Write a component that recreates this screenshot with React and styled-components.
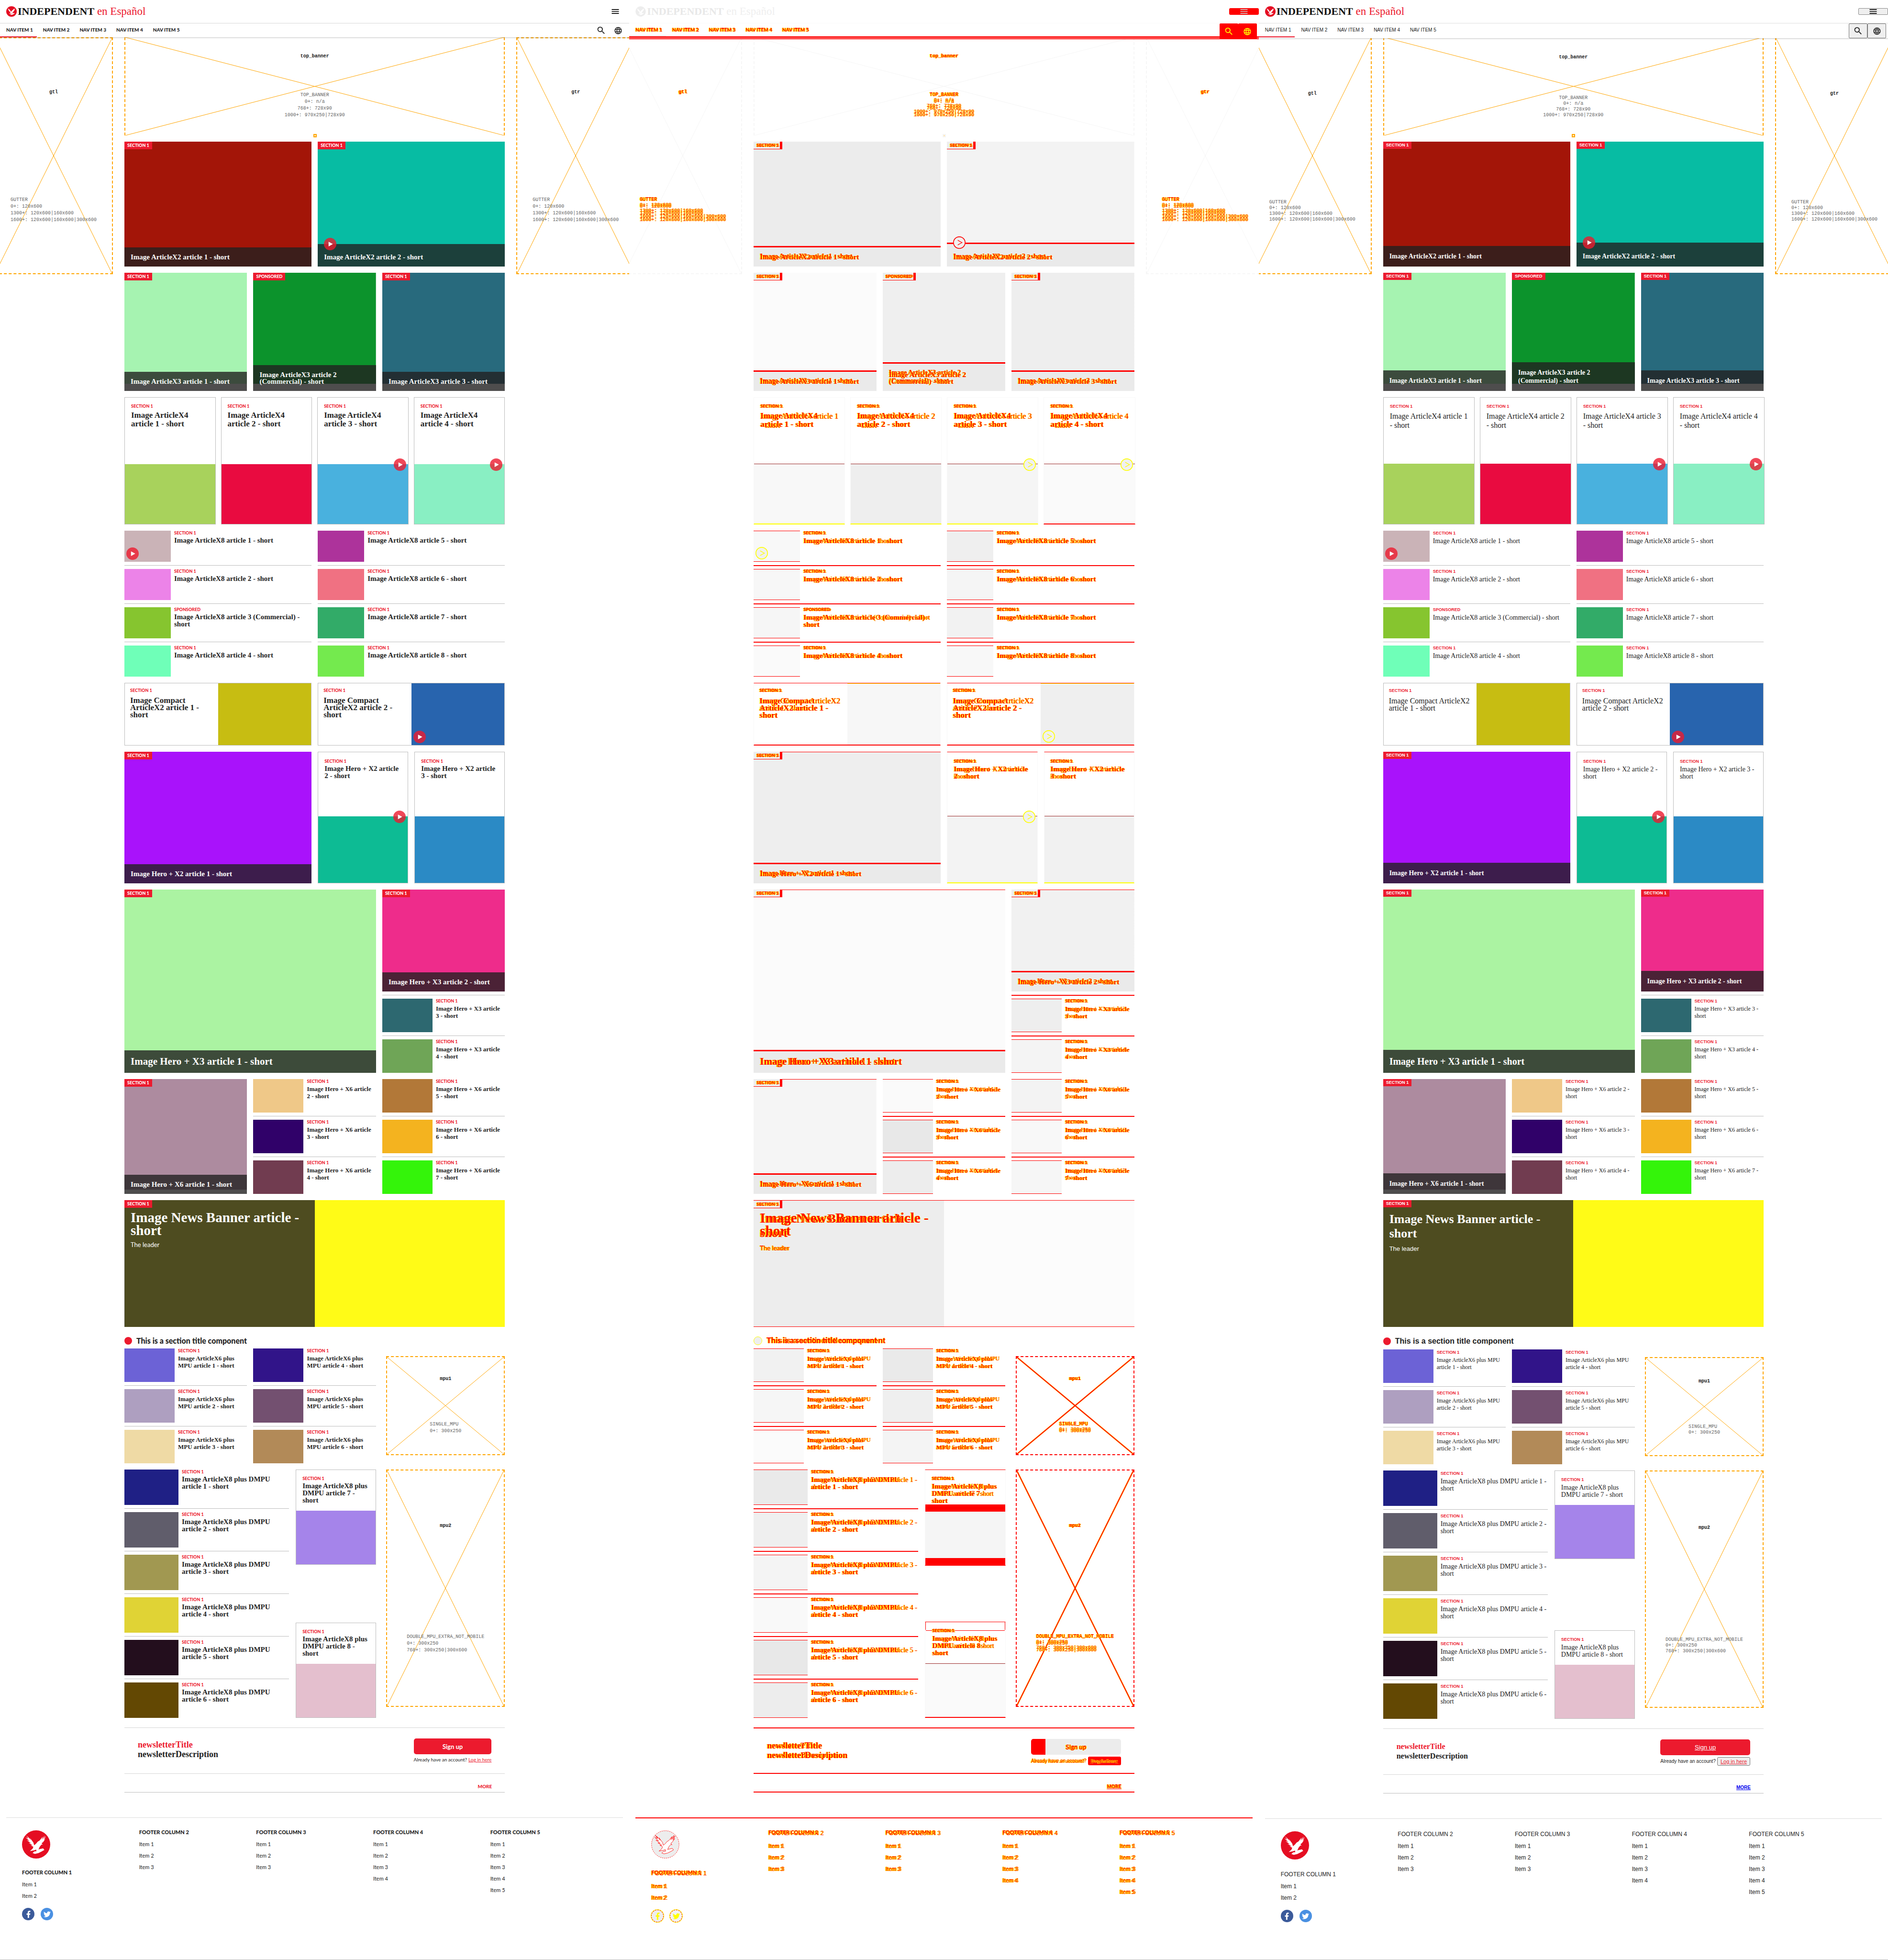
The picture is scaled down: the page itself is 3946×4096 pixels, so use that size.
import React from "react";
import styled, { createGlobalStyle, css, ThemeProvider, useTheme } from "styled-components";
import { MdMenu, MdSearch, MdLanguage } from "react-icons/md";
import { FaFacebookF, FaTwitter } from "react-icons/fa";

const RED = "#ec1a2e";
const INK = "#222222";
const LINE = "#bdbdbd";
const DIFF = "#ff0000";
const EDGE = "#ffff00";
const SERIF = '"Liberation Serif", "Times New Roman", serif';
const SANS = '"Liberation Sans", Arial, sans-serif';
const BRAND = 'Lato, "Open Sans", sans-serif';
const MONO = '"Liberation Mono", "Courier New", monospace';

/* Unchanged pixels of a comparison are faded to a tenth of their grey value. */
const fade = (hex) => {
  const n = parseInt(hex.slice(1), 16);
  const y = 0.3 * (n >> 16) + 0.59 * ((n >> 8) & 255) + 0.11 * (n & 255);
  const v = Math.round(255 - (255 - y) * 0.1);
  return `rgb(${v}, ${v}, ${v})`;
};
const paint = (theme, hex) => (theme.mode === "diff" ? fade(hex) : hex);
const pick = (theme, before, diff, after) => ({ before, diff, after })[theme.mode];

/* [family, size, line height, weight] of each text role, before and after. */
const TYPE = {
  kicker: { before: [BRAND, 9, 9, 900], after: [SANS, 9, 10, 700] },
  badge: { before: [BRAND, 9, 16, 900], after: [SANS, 9, 15, 700] },
  caption: { before: [SERIF, 15, 14, 700], after: [SERIF, 14, 17, 700] },
  captionLarge: { before: [SERIF, 21, 21, 700], after: [SERIF, 20, 22, 700] },
  large: { before: [SERIF, 17, 18, 700], after: [SERIF, 16, 19, 400] },
  compact: { before: [SERIF, 17, 15, 700], after: [SERIF, 16, 15, 400] },
  medium: { before: [SERIF, 15, 15, 700], after: [SERIF, 14, 15, 400] },
  small: { before: [SERIF, 13, 15, 700], after: [SERIF, 12, 15, 400] },
  banner: { before: [SERIF, 29, 27, 700], after: [SERIF, 26, 30, 700] },
  leader: { before: [BRAND, 13, 16, 400], after: [SANS, 13, 18, 400] },
  section: { before: [BRAND, 16, 16, 900], after: [SANS, 16, 18, 700] },
  news: { before: [SERIF, 18, 20, 700], after: [SERIF, 16, 20, 700] },
  button: { before: [BRAND, 13, 16, 700], after: [SANS, 13, 16, 400] },
  note: { before: [BRAND, 10, 14, 400], after: [SANS, 10, 14, 400] },
  link: { before: [BRAND, 10, 14, 400], after: [SANS, 11, 14, 400] },
  more: { before: [BRAND, 10, 12, 900], after: [SANS, 10, 14, 700] },
  nav: { before: [BRAND, 10, 14, 900], after: [SANS, 10, 16, 400] },
  footHead: { before: [BRAND, 11, 14, 900], after: [SANS, 12, 18, 400] },
  footItem: { before: [BRAND, 11, 24, 400], after: [SANS, 12, 24, 400] },
  adName: { before: [MONO, 10, 14, 700], after: [MONO, 10, 14, 700] },
  adSize: { before: [MONO, 10, 14, 400], after: [MONO, 10, 12, 400] },
};

const Global = createGlobalStyle`
  * { box-sizing: border-box; }
  body { margin: 0; background: #ffffff; }
  h2, h3, p, ul { margin: 0; padding: 0; font-weight: inherit; font-size: inherit; }
  ul { list-style: none; }
  a { color: inherit; text-decoration: none; }
  button { font: inherit; color: inherit; cursor: pointer; }
`;

const Board = styled.div`
  display: grid;
  grid-template-columns: repeat(3, minmax(0, 1fr));
  min-height: 100vh;
  border-bottom: 1px solid ${LINE};
`;

const Panel = styled.div`
  overflow: hidden;
  color: ${INK};
  background: #ffffff;
`;

const Copy = styled.span`
  display: block;
  grid-area: 1 / 1;
  white-space: pre;
  ${({ $role, $when }) => {
    const [family, size, line, weight] = TYPE[$role][$when];
    return css`
      font: ${weight} ${size}px / ${line}px ${family};
    `;
  }}
  ${({ theme }) =>
    theme.mode === "diff" &&
    css`
      color: ${DIFF};
      text-shadow: 1px 0 0 ${EDGE}, -1px 0 0 ${EDGE};
    `}
`;

const Stack = styled.span`
  display: grid;
  align-items: ${({ $end }) => ($end ? "end" : "start")};
`;

function Text({ role, end, children, after }) {
  const { mode } = useTheme();
  const next = after ?? children;
  if (mode === "before") return <Copy $role={role} $when="before">{children}</Copy>;
  if (mode === "after") return <Copy $role={role} $when="after">{next}</Copy>;
  return (
    <Stack $end={end}>
      <Copy $role={role} $when="after">{next}</Copy>
      <Copy $role={role} $when="before">{children}</Copy>
    </Stack>
  );
}

/* ---------- header ---------- */

const Header = styled.header`
  position: relative;
  z-index: 2;
  height: 78px;
`;

const TopBar = styled.div`
  display: flex;
  align-items: center;
  justify-content: space-between;
  height: 49px;
  padding-left: 13px;
  border-bottom: 1px solid ${({ theme }) => pick(theme, "#dddddd", "#fafafa", "#e2e2e2")};
`;

const Brand = styled.a`
  display: flex;
  align-items: center;
  gap: 2px;
  font: 700 22px / 30px ${SERIF};
  color: ${({ theme }) => pick(theme, "#111111", "#e8e8e8", "#111111")};
`;

const Edition = styled.span`
  font-size: 23px;
  font-weight: 400;
  color: ${({ theme }) => pick(theme, RED, "#efefef", RED)};
`;

const MenuButton = styled.button`
  display: flex;
  align-items: center;
  justify-content: center;
  height: 14px;
  width: 62px;
  padding: 0;
  color: #000000;
  border: 0;
  background: none;
  ${({ theme }) =>
    theme.mode === "before" &&
    css`
      width: 59px;
    `}
  ${({ theme }) =>
    theme.mode === "after" &&
    css`
      border: 1px solid #8a8a8a;
      border-radius: 2px;
      background: #efefef;
    `}
  ${({ theme }) =>
    theme.mode === "diff" &&
    css`
      color: #c9c9c9;
      border-radius: 3px;
      background: ${DIFF};
    `}
  svg { flex: none; }
`;

const NavBar = styled.nav`
  display: flex;
  justify-content: space-between;
  height: ${({ theme }) => pick(theme, 29, 33, 31)}px;
  background: #ffffff;
  ${({ theme }) =>
    theme.mode === "diff"
      ? css`
          border-bottom: 2px solid ${DIFF};
          box-shadow: inset 0 -1px 0 #ffffff, inset 0 -4px 0 ${DIFF};
        `
      : css`
          box-shadow: 0 1px 2px rgba(0, 0, 0, 0.25);
        `}
`;

const NavList = styled.ul`
  display: flex;
`;

const NavItem = styled.li`
  height: ${({ theme }) => pick(theme, 29, 27, 29)}px;
  padding: 6px 8px 0 13px;
  border-bottom: 2px solid
    ${({ $current, theme }) => ($current ? pick(theme, RED, "#eeeeee", RED) : "transparent")};
`;

const Tools = styled.div`
  display: flex;
  padding-right: ${({ theme }) => pick(theme, 5, 4, 4)}px;
`;

const ToolButton = styled.button`
  display: flex;
  align-items: center;
  justify-content: center;
  width: ${({ theme }) => pick(theme, 36, 39, 39)}px;
  height: ${({ theme }) => pick(theme, 29, 33, 31)}px;
  padding: 0;
  border: ${({ theme }) => pick(theme, "0", "0", "1px solid #767676")};
  border-radius: 2px;
  color: ${({ theme }) => pick(theme, INK, EDGE, INK)};
  background: ${({ theme }) => pick(theme, "none", DIFF, "#efefef")};
`;

function Eagle({ size, id }) {
  const { mode } = useTheme();
  const diff = mode === "diff";
  return (
    <svg width={size} height={size} viewBox="0 0 72 72" role="img" aria-label="Independent">
      <circle
        cx="36"
        cy="36"
        r={diff ? 35 : 36}
        fill={diff ? "#ededed" : "#e50d22"}
        stroke={diff && id === "foot" ? DIFF : "none"}
        strokeDasharray="3 2"
      />
      <g fill="#ffffff" stroke={diff && id === "foot" ? DIFF : "none"} strokeWidth="1">
        <path d="M10 12 L17 20 L14 15 L23 25 L20 19 L29 31 L31 38 L36 34 L40 29 L45 26 L53 16 L50 24 L58 13 L54 23 L61 14 L56 25 L60 21 L54 30 L50 33 L53 37 L50 36 L45 42 L42 49 L45 48 L54 46 L57 50 L50 54 L42 58 L33 60 L27 58 L31 54 L37 53 L36 49 L31 51 L20 53 L27 47 L29 42 L22 38 L27 38 L17 32 L23 33 L12 25 L19 27 L9 18 L16 21 Z" />
      </g>
    </svg>
  );
}

function SiteHeader() {
  return (
    <Header>
      <TopBar>
        <Brand href="#home">
          <Eagle size={22} id="head" />
          <span>INDEPENDENT<Edition> en Español</Edition></span>
        </Brand>
        <MenuButton aria-label="Menu"><MdMenu size={20} /></MenuButton>
      </TopBar>
      <NavBar>
        <NavList>
          {[1, 2, 3, 4, 5].map((n) => (
            <NavItem key={n} $current={n === 1}>
              <a href={`#nav-${n}`}><Text role="nav">{`NAV ITEM ${n}`}</Text></a>
            </NavItem>
          ))}
        </NavList>
        <Tools>
          <ToolButton aria-label="Search"><MdSearch size={21} /></ToolButton>
          <ToolButton aria-label="Language"><MdLanguage size={18} /></ToolButton>
        </Tools>
      </NavBar>
    </Header>
  );
}

/* ---------- advertising slots ---------- */

const Slot = styled.aside`
  position: relative;
  width: ${({ $w }) => ($w ? `${$w}px` : "auto")};
  height: ${({ $h }) => $h}px;
  border: 2px dashed ${({ $tone }) => $tone};
  ${({ $sides }) =>
    $sides &&
    css`
      border-top: 0;
      border-bottom: 0;
    `}
  svg.cross {
    position: absolute;
    inset: 0;
    width: 100%;
    height: 100%;
  }
`;

const SlotText = styled.div`
  position: relative;
  display: grid;
  grid-template-rows: 1fr 1fr;
  height: 100%;
  > div {
    display: flex;
    align-items: center;
    justify-content: center;
    padding-bottom: ${({ $lift, theme }) => $lift - pick(theme, 0, 0, 5)}px;
  }
  > div:last-child {
    color: #666666;
    text-align: ${({ $center }) => ($center ? "center" : "left")};
  }
`;

const SlotMark = styled.i`
  position: absolute;
  left: 50%;
  bottom: -4px;
  width: 7px;
  height: 7px;
  margin-left: -3px;
  border: 2px solid ${({ $tone }) => $tone};
  background: #ffe9bd;
`;

function Ad({ name, lines, w, h, lift, sides, changed, center }) {
  const { mode } = useTheme();
  const tone = mode !== "diff" ? "#ffa500" : changed ? DIFF : "#f6f6f6";
  const marked = mode === "diff" && changed;
  return (
    <Slot $w={w} $h={h} $tone={tone} $sides={sides}>
      <svg className="cross" viewBox="0 0 100 100" preserveAspectRatio="none" aria-hidden="true">
        {marked && (
          <path d="M0 0 L100 100 M100 0 L0 100" stroke={EDGE} strokeWidth="3" fill="none" vectorEffect="non-scaling-stroke" />
        )}
        <path
          d="M0 0 L100 100 M100 0 L0 100"
          stroke={tone}
          strokeWidth={marked ? 2 : 1}
          fill="none"
          vectorEffect="non-scaling-stroke"
        />
      </svg>
      <SlotText $lift={lift} $center={center}>
        <div><Text role="adName">{name}</Text></div>
        <div><Text role="adSize">{lines.join("\n")}</Text></div>
      </SlotText>
      {sides && <SlotMark $tone={tone} />}
    </Slot>
  );
}

/* ---------- article parts ---------- */

const Kicker = styled.p`
  color: ${RED};
`;

const Badge = styled.p`
  align-self: flex-start;
  height: ${({ theme }) => pick(theme, 16, 16, 15)}px;
  padding: 0 6px;
  color: #ffffff;
  background: ${({ theme }) => pick(theme, RED, "#eeeeee", RED)};
  ${({ theme }) =>
    theme.mode === "diff" &&
    css`
      border-right: 5px solid ${DIFF};
      border-bottom: 1px solid ${DIFF};
      padding-right: 1px;
    `}
`;

const TileBox = styled.article`
  position: relative;
  display: flex;
  flex-direction: column;
  justify-content: space-between;
  height: ${({ $h }) => $h}px;
  background: linear-gradient(${({ $c, theme }) => `${paint(theme, $c)}, ${paint(theme, $c)}`})
    top / 100% ${({ $image, $h }) => $image || $h}px no-repeat;
  ${({ theme, $edge }) =>
    theme.mode === "diff" && $edge &&
    css`
      box-shadow: inset 0 1px 0 ${DIFF}, inset 0 -1px 0 ${DIFF};
    `}
`;

const Caption = styled.div`
  position: relative;
  padding: ${({ $play }) => ($play ? 20 : 13)}px 13px 13px;
  color: #ffffff;
  background: ${({ theme }) => pick(theme, "rgba(34, 32, 32, 0.8)", "#eaeaea", "rgba(34, 32, 32, 0.8)")};
  ${({ theme }) =>
    theme.mode === "diff" &&
    css`
      box-shadow: inset 0 3px 0 ${DIFF};
    `}
`;

const PlayDisc = styled.span`
  position: absolute;
  z-index: 1;
  display: block;
  width: 26px;
  height: 26px;
  ${({ $at }) =>
    ({
      caption: css`top: -13px; left: 13px;`,
      thumb: css`bottom: 4px; left: 4px;`,
      edge: css`top: -12px; right: 4px;`,
    })[$at]}
  svg { display: block; }
`;

function Play({ at }) {
  const { mode } = useTheme();
  const diff = mode === "diff";
  return (
    <PlayDisc $at={at}>
      <svg width="26" height="26" viewBox="0 0 32 32" role="img" aria-label="Video">
        <circle
          cx="16"
          cy="16"
          r={diff ? 15 : 16}
          fill={diff ? "#f0f0f0" : "rgba(236, 26, 46, 0.8)"}
          stroke={diff ? (at === "caption" ? DIFF : EDGE) : "none"}
          strokeWidth="2"
        />
        <path
          d={diff ? "M12 10 L23 16 L12 22" : "M12 10 L23 16 L12 22 Z"}
          fill={diff ? "none" : "#ffffff"}
          stroke={diff ? (at === "caption" ? DIFF : EDGE) : "none"}
          strokeWidth="1.5"
        />
      </svg>
    </PlayDisc>
  );
}

function Tile({ h, image, color, badge = "SECTION 1", title, after, play, role = "caption", edge }) {
  return (
    <TileBox $h={h} $c={color} $image={image} $edge={edge}>
      <Badge><Text role="badge">{badge}</Text></Badge>
      <Caption $play={play}>
        {play && <Play at="caption" />}
        <h3><Text role={role} end after={after}>{title}</Text></h3>
      </Caption>
    </TileBox>
  );
}

const CardBox = styled.article`
  display: flex;
  flex-direction: ${({ $row }) => ($row ? "row" : "column")};
  height: ${({ $h }) => ($h ? `${$h}px` : "auto")};
  border: 1px solid ${({ theme }) => pick(theme, LINE, "#f8f8f8", LINE)};
  ${({ theme, $top, $bottom }) =>
    theme.mode === "diff" &&
    css`
      border-top-color: ${$top || "#f8f8f8"};
      border-bottom-color: ${$bottom || "#f8f8f8"};
      border-bottom-width: 2px;
    `}
`;

const CardText = styled.div`
  flex: ${({ $row }) => ($row ? "0 0 50%" : "1 1 0")};
  min-width: 0;
  padding: ${({ $pad }) => $pad};
  h3 { margin-top: ${({ $gap }) => $gap}px; }
  ${({ theme, $moved }) =>
    theme.mode === "diff" && $moved === "box" &&
    css`
      border: solid ${DIFF};
      border-width: 0 1px;
      border-image: linear-gradient(${DIFF} 17px, transparent 17px) 1;
      background: linear-gradient(${DIFF}, ${DIFF}) 0 17px / 100% 1px no-repeat;
    `}
`;

const Picture = styled.div`
  position: relative;
  flex: ${({ $h }) => ($h ? `0 0 ${$h}px` : "1 1 0")};
  background: ${({ $c, theme }) => paint(theme, $c)};
  ${({ theme, $row }) =>
    theme.mode === "diff" &&
    css`
      border-top: 1px solid ${$row ? EDGE : "#9a2a2a"};
    `}
  ${({ theme, $moved }) =>
    theme.mode === "diff" && $moved === "bars" &&
    css`
      border-top-color: ${DIFF};
      box-shadow: 0 -14px 0 ${DIFF}, inset 0 -14px 0 ${DIFF};
    `}
`;

function Card({ h, image, color, title, after, role, pad, gap, play, row, top, bottom, moved }) {
  return (
    <CardBox $h={h} $row={row} $top={top} $bottom={bottom}>
      <CardText $pad={pad} $gap={gap} $row={row} $moved={moved}>
        <Kicker><Text role="kicker">SECTION 1</Text></Kicker>
        <h3><Text role={role} after={after}>{title}</Text></h3>
      </CardText>
      <Picture $h={image} $c={color} $row={row} $moved={moved}>
        {play && <Play at={row ? "thumb" : "edge"} />}
      </Picture>
    </CardBox>
  );
}

const List = styled.div`
  display: flex;
  flex-direction: column;
  > * + * {
    margin-top: 7px;
    padding-top: ${({ theme }) => pick(theme, 7, 6, 7)}px;
    border-top: ${({ theme }) => pick(theme, `1px solid ${LINE}`, `2px solid ${DIFF}`, `1px solid ${LINE}`)};
  }
`;

const RowBox = styled.article`
  display: flex;
  gap: 7px;
`;

const Thumb = styled.div`
  position: relative;
  flex: 0 0 ${({ $w }) => $w}px;
  height: ${({ $h }) => $h}px;
  background: ${({ $c, theme }) => paint(theme, $c)};
  ${({ theme }) =>
    theme.mode === "diff" &&
    css`
      border: solid ${DIFF};
      border-width: 1px 0;
    `}
`;

const RowText = styled.div`
  padding-top: ${({ theme, $drop }) => pick(theme, 0, 0, $drop ? 1 : 0)}px;
  h3 { margin-top: 4px; }
`;

function Row({ w, h, color, kicker = "SECTION 1", title, after, role, play, drop }) {
  return (
    <RowBox>
      <Thumb $w={w} $h={h} $c={color}>{play && <Play at="thumb" />}</Thumb>
      <RowText $drop={drop}>
        <Kicker><Text role="kicker">{kicker}</Text></Kicker>
        <h3><Text role={role} after={after}>{title}</Text></h3>
      </RowText>
    </RowBox>
  );
}

/* ---------- page body ---------- */

const Main = styled.main`
  display: grid;
  grid-template-columns: 248px minmax(0, 1fr) 248px;
  align-items: start;
  column-gap: 24px;
  margin: 0 -12px;
`;

const Center = styled.div`
  display: flex;
  flex-direction: column;
  gap: 13px;
`;

const Columns = styled.section`
  display: grid;
  grid-template-columns: ${({ $cols }) => $cols};
  column-gap: ${({ $gap }) => $gap || 13}px;
  align-items: start;
`;

const Wide = styled.div`
  grid-column: span 2;
`;

const NewsBanner = styled.article`
  display: grid;
  grid-template-columns: 1fr 1fr;
  height: 265px;
  background: ${({ theme }) => paint(theme, "#fffb17")};
  ${({ theme }) =>
    theme.mode === "diff" &&
    css`
      border: solid ${DIFF};
      border-width: 1px 0;
    `}
`;

const NewsText = styled.div`
  display: flex;
  flex-direction: column;
  color: #ffffff;
  background: ${({ theme }) => paint(theme, "#4e4c20")};
  box-shadow: inset 1px 0 0 ${({ theme }) => pick(theme, "#4d4d3a", "#ebebeb", "#4d4d3a")};
  h2 { margin: ${({ theme }) => pick(theme, 7, 7, 10)}px 13px 0; }
  p + h2 + p { margin: 8px 13px 0; }
`;

const SectionTitle = styled.h2`
  display: flex;
  align-items: center;
  gap: 9px;
  height: ${({ theme }) => pick(theme, 16, 16, 18)}px;
  margin: 8px 0 8px;
  &::before {
    content: "";
    width: 16px;
    height: 16px;
    border-radius: 50%;
    background: ${({ theme }) => pick(theme, RED, "#eeeeee", RED)};
    border: ${({ theme }) => pick(theme, "0", `1px solid ${EDGE}`, "0")};
  }
`;

const AdCell = styled.div`
  display: flex;
  justify-content: flex-end;
  padding-top: ${({ $top }) => $top || 0}px;
`;

const Spread = styled.div`
  display: flex;
  flex-direction: column;
  justify-content: space-between;
  align-self: stretch;
`;

const Newsletter = styled.section`
  display: flex;
  justify-content: space-between;
  height: 97px;
  margin-top: 7px;
  padding: 22px 28px 0;
  border: solid ${({ theme }) => pick(theme, "#d6d6d6", DIFF, "#d6d6d6")};
  border-width: ${({ theme }) => pick(theme, 1, 2, 1)}px 0;
`;

const NewsletterText = styled.div`
  padding-top: ${({ theme }) => pick(theme, 3, 4, 5)}px;
  h2 { color: ${RED}; }
`;

const SignUp = styled.div`
  display: flex;
  flex-direction: column;
`;

const SignUpButton = styled.button`
  display: flex;
  align-items: center;
  justify-content: center;
  height: 33px;
  border: 0;
  border-radius: 5px;
  color: #ffffff;
  text-decoration: ${({ theme }) => pick(theme, "none", "none", "underline")};
  background: ${({ theme }) =>
    pick(theme, RED, `linear-gradient(90deg, ${DIFF} 30px, #ececec 30px)`, RED)};
`;

const LoginLine = styled.div`
  display: flex;
  align-items: center;
  gap: 3px;
  height: ${({ theme }) => pick(theme, 22, 26, 26)}px;
`;

const LoginButton = styled.button`
  padding: ${({ theme }) => pick(theme, "0", "2px 7px", "1px 6px")};
  border: ${({ theme }) => pick(theme, "0", "0", "1px solid #767676")};
  border-radius: 3px;
  color: ${RED};
  text-decoration: underline;
  background: ${({ theme }) => pick(theme, "none", DIFF, "#efefef")};
`;

const More = styled.div`
  display: flex;
  justify-content: flex-end;
  height: 39px;
  margin-top: -13px;
  padding: 20px 27px 0 0;
  border-bottom: ${({ theme }) => pick(theme, `1px solid ${LINE}`, `2px solid ${DIFF}`, `1px solid ${LINE}`)};
  a {
    color: ${({ theme }) => pick(theme, RED, DIFF, "#0000ee")};
    text-decoration: ${({ theme }) => pick(theme, "none", "underline", "underline")};
  }
`;

const Footer = styled.footer`
  display: grid;
  grid-template-columns: repeat(5, 1fr);
  margin: 52px 13px 0;
  padding: 23px 33px 0;
  border-top: 1px solid ${({ theme }) => pick(theme, "#dcdcdc", DIFF, "#dcdcdc")};
  box-shadow: ${({ theme }) => pick(theme, "none", `inset 0 1px 0 ${DIFF}`, "none")};
`;

const FootColumn = styled.div`
  h2 { margin-bottom: ${({ theme }) => pick(theme, 6, 6, 4)}px; }
  > svg { display: block; margin: 3px 0 22px; }
`;

const Social = styled.div`
  display: flex;
  gap: 13px;
  margin-top: 13px;
`;

const SocialLink = styled.a`
  display: flex;
  align-items: center;
  justify-content: center;
  width: 26px;
  height: 26px;
  border-radius: 50%;
  color: #ffffff;
  background: ${({ $c, theme }) => paint(theme, $c)};
  ${({ theme }) =>
    theme.mode === "diff" &&
    css`
      color: ${EDGE};
      border: 1px dashed ${DIFF};
      box-shadow: 0 0 0 1px ${EDGE};
    `}
`;

const GUTTER = ["GUTTER", "0+: 120x600", "1300+: 120x600|160x600", "1600+: 120x600|160x600|300x600"];

function FeedRows({ from, colors, render }) {
  return <List>{colors.map((c, i) => render(from + i, c))}</List>;
}

const x8 = (n, c) => (
  <Row
    key={n}
    w={97}
    h={65}
    color={c}
    role="medium"
    play={n === 1}
    kicker={n === 3 ? "SPONSORED" : undefined}
    title={n === 3 ? "Image ArticleX8 article 3 (Commercial) -\nshort" : `Image ArticleX8 article ${n} - short`}
    after={n === 3 ? "Image ArticleX8 article 3 (Commercial) - short" : undefined}
  />
);

const hero = (set) => (n, c) => (
  <Row
    key={n}
    w={105}
    h={70}
    color={c}
    role="small"
    title={`Image Hero + ${set} article\n${n} - short`}
    after={`Image Hero + ${set} article ${n} -\nshort`}
  />
);

const mpu = (n, c) => (
  <Row
    key={n}
    w={105}
    h={70}
    color={c}
    role="small"
    drop
    title={`Image ArticleX6 plus\nMPU article ${n} - short`}
    after={`Image ArticleX6 plus MPU\narticle ${n} - short`}
  />
);

const dmpu = (n, c) => (
  <Row
    key={n}
    w={113}
    h={74}
    color={c}
    role="medium"
    drop
    title={`Image ArticleX8 plus DMPU\narticle ${n} - short`}
    after={`Image ArticleX8 plus DMPU article ${n} -\nshort`}
  />
);

function Page({ mode }) {
  return (
    <ThemeProvider theme={{ mode }}>
      <Panel>
        <SiteHeader />
        <Main>
          <Ad name="gtl" lines={GUTTER} w={248} h={495} lift={19} />
          <Center>
            <Ad
              name="top_banner"
              lines={["TOP_BANNER", "0+: n/a", "768+: 728x90", "1000+: 970x250|728x90"]}
              h={205}
              lift={23}
              sides
              center
            />

            <Columns $cols="1fr 1fr">
              <Tile h={261} color="#a31508" title="Image ArticleX2 article 1 - short" />
              <Tile h={261} color="#07bca3" title="Image ArticleX2 article 2 - short" play />
            </Columns>

            <Columns $cols="repeat(3, 1fr)">
              <Tile h={247} image={232} color="#a6f3b1" title="Image ArticleX3 article 1 - short" />
              <Tile
                h={247}
                image={232}
                color="#0c932c"
                badge="SPONSORED"
                title={"Image ArticleX3 article 2\n(Commercial) - short"}
              />
              <Tile h={247} image={232} color="#286a7d" title="Image ArticleX3 article 3 - short" />
            </Columns>

            <Columns $cols="repeat(4, 1fr)" $gap={11}>
              {["#a8d25c", "#e90b40", "#49b1de", "#89efc3"].map((c, i) => (
                <Card
                  key={c}
                  h={266}
                  image={mode === "after" ? 126 : 125}
                  color={c}
                  role="large"
                  pad="13px 13px 0"
                  gap={6}
                  play={i > 1}
                  bottom={i === 3 ? DIFF : EDGE}
                  title={`Image ArticleX4\narticle ${i + 1} - short`}
                  after={`Image ArticleX4 article ${i + 1}\n- short`}
                />
              ))}
            </Columns>

            <Columns $cols="1fr 1fr">
              <FeedRows from={1} colors={["#cab3b7", "#ec83e8", "#86c52f", "#6fffb8"]} render={x8} />
              <FeedRows from={5} colors={["#ad339b", "#f07182", "#32ab68", "#74ea4e"]} render={x8} />
            </Columns>

            <Columns $cols="1fr 1fr">
              {["#c7bd12", "#2864ae"].map((c, i) => (
                <Card
                  key={c}
                  row
                  h={131}
                  color={c}
                  role="compact"
                  pad="10px 11px 0"
                  gap={9}
                  play={i === 1}
                  top={DIFF}
                  bottom={DIFF}
                  title={`Image Compact\nArticleX2 article ${i + 1} -\nshort`}
                  after={`Image Compact ArticleX2\narticle ${i + 1} - short`}
                />
              ))}
            </Columns>

            <Columns $cols="391fr 189fr 189fr">
              <Tile h={275} color="#a912fb" title="Image Hero + X2 article 1 - short" edge />
              {["#0dbb94", "#2b8ac5"].map((c, i) => (
                <Card
                  key={c}
                  h={275}
                  image={139}
                  color={c}
                  role="medium"
                  pad="14px 13px 0"
                  gap={4}
                  play={i === 0}
                  top={DIFF}
                  bottom={EDGE}
                  title={`Image Hero + X2 article\n${i + 2} - short`}
                  after={`Image Hero + X2 article ${i + 2} -\nshort`}
                />
              ))}
            </Columns>

            <Columns $cols="repeat(3, 1fr)">
              <Wide>
                <Tile h={383} color="#abf3a2" role="captionLarge" title="Image Hero + X3 article 1 - short" edge />
              </Wide>
              <List>
                <Tile h={213} color="#ee2c8b" title="Image Hero + X3 article 2 - short" edge />
                {hero("X3")(3, "#2d6870")}
                {hero("X3")(4, "#6fa557")}
              </List>
            </Columns>

            <Columns $cols="repeat(3, 1fr)">
              <Tile h={240} image={231} color="#ad8b9f" title="Image Hero + X6 article 1 - short" edge />
              <FeedRows from={2} colors={["#efc888", "#300169", "#713c50"]} render={hero("X6")} />
              <FeedRows from={5} colors={["#b27838", "#f4b31f", "#34f40a"]} render={hero("X6")} />
            </Columns>

            <NewsBanner>
              <NewsText>
                <Badge><Text role="badge">SECTION 1</Text></Badge>
                <h2><Text role="banner">{"Image News Banner article -\nshort"}</Text></h2>
                <p><Text role="leader">The leader</Text></p>
              </NewsText>
            </NewsBanner>

            <div>
              <SectionTitle><Text role="section">This is a section title component</Text></SectionTitle>
              <Columns $cols="repeat(3, 1fr)">
                <FeedRows from={1} colors={["#6c62d6", "#ae9fc0", "#efdaa5"]} render={mpu} />
                <FeedRows from={4} colors={["#311489", "#735070", "#b28a58"]} render={mpu} />
                <AdCell $top={16}>
                  <Ad name="mpu1" lines={["SINGLE_MPU", "0+: 300x250"]} w={248} h={207} lift={9} changed />
                </AdCell>
              </Columns>
            </div>

            <Columns $cols="344fr 168fr 255fr" $gap={14}>
              <FeedRows
                from={1}
                colors={["#1f2085", "#605d6b", "#a19851", "#e0d335", "#230e1d", "#634803"]}
                render={dmpu}
              />
              <Spread>
                {["#a584ea", "#e4bfce"].map((c, i) => (
                  <Card
                    key={c}
                    image={112}
                    color={c}
                    role="medium"
                    pad="13px 13px 14px"
                    gap={4}
                    top={DIFF}
                    bottom={DIFF}
                    moved={i === 0 ? "bars" : "box"}
                    title={`Image ArticleX8 plus\nDMPU article ${i + 7} -\nshort`}
                    after={`Image ArticleX8 plus\nDMPU article ${i + 7} - short`}
                  />
                ))}
              </Spread>
              <AdCell>
                <Ad
                  name="mpu2"
                  lines={["DOUBLE_MPU_EXTRA_NOT_MOBILE", "0+: 300x250", "768+: 300x250|300x600"]}
                  w={248}
                  h={496}
                  lift={15}
                  changed
                />
              </AdCell>
            </Columns>

            <Newsletter>
              <NewsletterText>
                <h2><Text role="news">newsletterTitle</Text></h2>
                <p><Text role="news">newsletterDescription</Text></p>
              </NewsletterText>
              <SignUp>
                <SignUpButton><Text role="button">Sign up</Text></SignUpButton>
                <LoginLine>
                  <Text role="note">Already have an account?</Text>
                  <LoginButton><Text role="link">Log in here</Text></LoginButton>
                </LoginLine>
              </SignUp>
            </Newsletter>
            <More><a href="#more"><Text role="more">MORE</Text></a></More>
          </Center>
          <Ad name="gtr" lines={GUTTER} w={248} h={495} lift={19} />
        </Main>

        <Footer>
          {[2, 3, 3, 4, 5].map((count, i) => (
            <FootColumn key={i}>
              {i === 0 && <Eagle size={59} id="foot" />}
              <h2><Text role="footHead">{`FOOTER COLUMN ${i + 1}`}</Text></h2>
              <ul>
                {Array.from({ length: count }, (_, k) => (
                  <li key={k}><a href={`#item-${k + 1}`}><Text role="footItem">{`Item ${k + 1}`}</Text></a></li>
                ))}
              </ul>
              {i === 0 && (
                <Social>
                  <SocialLink href="#facebook" aria-label="Facebook" $c="#3b5a9a"><FaFacebookF size={15} /></SocialLink>
                  <SocialLink href="#twitter" aria-label="Twitter" $c="#4a90e2"><FaTwitter size={15} /></SocialLink>
                </Social>
              )}
            </FootColumn>
          ))}
        </Footer>
      </Panel>
    </ThemeProvider>
  );
}

export default function App() {
  return (
    <>
      <Global />
      <Board>
        <Page mode="before" />
        <Page mode="diff" />
        <Page mode="after" />
      </Board>
    </>
  );
}
